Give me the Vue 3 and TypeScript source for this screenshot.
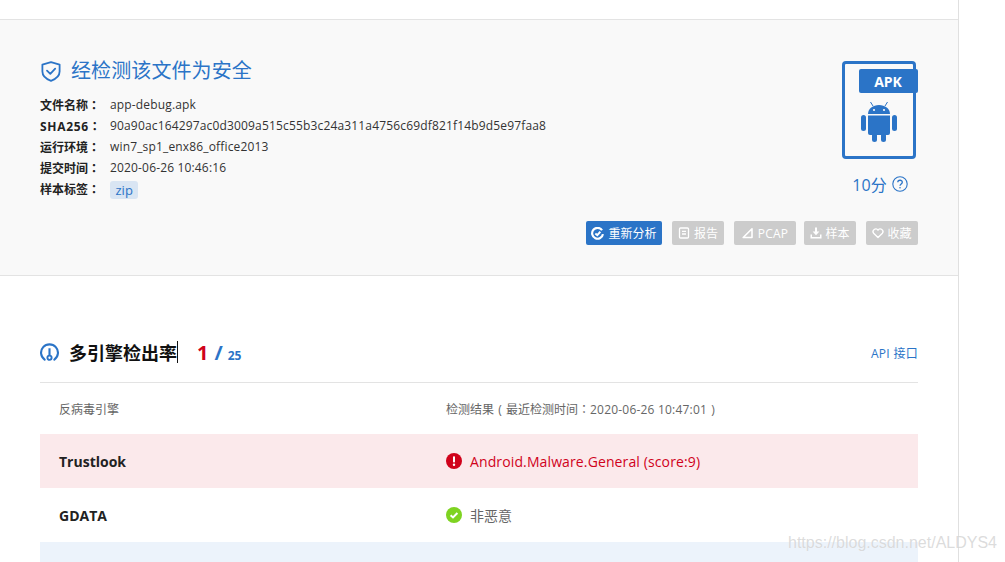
<script setup lang="ts">
const meta = [
  { label: '文件名称', value: 'app-debug.apk' },
  { label: 'SHA256', value: '90a90ac164297ac0d3009a515c55b3c24a311a4756c69df821f14b9d5e97faa8' },
  { label: '运行环境', value: 'win7_sp1_enx86_office2013' },
  { label: '提交时间', value: '2020-06-26 10:46:16' },
]
</script>

<template>
  <div class="viewport">
    <div class="page">
      <section class="summary">
        <div class="info">
          <h1 class="verdict">
            <svg class="shield" viewBox="0 0 20 21" width="20" height="21" fill="none" stroke="#2b74c7" stroke-width="1.8">
              <path d="M10 1.2 L18.6 3.6 V10.5 C18.6 15.2 14.5 18.2 10 19.8 C5.5 18.2 1.4 15.2 1.4 10.5 V3.6 Z" stroke-linejoin="round" />
              <path d="M6 9.6 L9.3 12.8 L14.2 7.6" stroke-linecap="round" stroke-linejoin="round" />
            </svg>
            <span>经检测该文件为安全</span>
          </h1>
          <dl class="meta">
            <div v-for="m in meta" :key="m.label" class="meta-row">
              <dt><span :class="{ sha: m.label === 'SHA256' }">{{ m.label }}</span><span class="punct">：</span></dt>
              <dd>{{ m.value }}</dd>
            </div>
            <div class="meta-row">
              <dt>样本标签<span class="punct">：</span></dt>
              <dd><span class="tag">zip</span></dd>
            </div>
          </dl>
        </div>
        <div class="side">
          <div class="score-box">
            <div class="apk-file">
              <div class="apk-flag">APK</div>
              <svg class="android" viewBox="0 0 36 42" width="36" height="42" fill="#2b74c7">
                <path d="M9.5 2 L12 6 M26.5 2 L24 6" stroke="#2b74c7" stroke-width="1" fill="none" />
                <path d="M7 14 C7 8.5 12 5 18 5 C24 5 29 8.5 29 14 Z" />
                <circle cx="13" cy="10" r="1.1" fill="#f9f9f9" />
                <circle cx="23" cy="10" r="1.1" fill="#f9f9f9" />
                <path d="M7 15.5 H29 V33 a2 2 0 0 1 -2 2 H9 a2 2 0 0 1 -2 -2 Z" />
                <rect x="0" y="15" width="5" height="16" rx="2.5" />
                <rect x="31" y="15" width="5" height="16" rx="2.5" />
                <rect x="11" y="33" width="5" height="9" rx="2.5" />
                <rect x="20" y="33" width="5" height="9" rx="2.5" />
              </svg>
            </div>
            <div class="score">
              <span>10分</span>
              <svg viewBox="0 0 16 16" width="16" height="16" fill="none" stroke="#2b74c7" stroke-width="1.1">
                <circle cx="8" cy="8" r="7.2" />
                <path d="M5.8 6.3 C5.8 3.6 10.3 3.6 10.3 6.2 C10.3 8 8 7.9 8 9.8" stroke-width="1.3" />
                <circle cx="8" cy="11.8" r="0.8" fill="#2b74c7" stroke="none" />
              </svg>
            </div>
          </div>
          <div class="actions">
            <button class="btn primary">
              <svg viewBox="0 0 12 12" width="13" height="13" fill="none" stroke="#fff" stroke-width="2">
                <path d="M10.2 3 A5 5 0 1 0 11 6.5" />
                <path d="M4 6 L5.8 7.6 L8.6 4.4" stroke-width="1.8" />
              </svg>
              重新分析
            </button>
            <button class="btn">
              <svg viewBox="0 0 12 12" width="12" height="12" fill="none" stroke="#fff" stroke-width="1.3">
                <rect x="1.5" y="1" width="9" height="10" rx="1" />
                <path d="M4 4.3 H8 M4 7 H8" />
              </svg>
              <span class="gap">报告</span>
            </button>
            <button class="btn pcap">
              <svg viewBox="0 0 12 12" width="12" height="12" fill="none" stroke="#fff" stroke-width="1.6">
                <path d="M1.2 10.5 H10 V1.8 Z" stroke-linejoin="round" />
              </svg>
              <span class="gap">PCAP</span>
            </button>
            <button class="btn tight">
              <svg viewBox="0 0 12 12" width="12" height="12" fill="#fff">
                <path d="M5 0.5 H7 V4.5 H9.4 L6 8.2 L2.6 4.5 H5 Z" />
                <path d="M0.5 7.5 H2 V10 H10 V7.5 H11.5 V11.5 H0.5 Z" />
              </svg>
              样本
            </button>
            <button class="btn">
              <svg viewBox="0 0 12 12" width="12" height="12" fill="none" stroke="#fff" stroke-width="1.4">
                <path d="M6 10.6 L1.6 6.2 C-0.4 3.4 3.8 0 6 3.2 C8.2 0 12.4 3.4 10.4 6.2 Z" stroke-linejoin="round" />
              </svg>
              收藏
            </button>
          </div>
        </div>
      </section>

      <section class="engines">
        <header class="engines-head">
          <div class="title-wrap">
            <svg viewBox="0 0 18 18" width="19" height="19" fill="none" stroke="#2b74c7" stroke-width="2">
              <path d="M4.4 15.8 A8 8 0 1 1 13.6 15.8" stroke-linecap="round" />
              <path d="M9 5 V11.5" stroke-width="2" />
              <circle cx="9" cy="14" r="2" stroke-width="1.8" />
            </svg>
            <h2 class="title">多引擎检出率<i class="caret"></i></h2>
            <span class="rate"><b class="hit">1</b><b class="slash">/</b><b class="total">25</b></span>
          </div>
          <a class="api">API 接口</a>
        </header>
        <div class="row head-row">
          <div class="col-a">反病毒引擎</div>
          <div class="col-b">检测结果<span class="paren">(</span>最近检测时间<span class="punct">：</span><span class="date">2020-06-26 10:47:01</span><span class="paren">)</span></div>
        </div>
        <div class="row danger">
          <div class="col-a strong">Trustlook</div>
          <div class="col-b result">
            <svg viewBox="0 0 16 16" width="16" height="16">
              <circle cx="8" cy="8" r="8" fill="#d0021b" />
              <rect x="7" y="3.2" width="2" height="6.4" rx="0.8" fill="#fff" />
              <circle cx="8" cy="11.8" r="1.2" fill="#fff" />
            </svg>
            <span class="malware">Android.Malware.General (score:9)</span>
          </div>
        </div>
        <div class="row">
          <div class="col-a strong">GDATA</div>
          <div class="col-b result safe">
            <svg viewBox="0 0 16 16" width="16" height="16">
              <circle cx="8" cy="8" r="8" fill="#7ed321" />
              <path d="M4.6 8.2 L7 10.4 L11.4 6" fill="none" stroke="#fff" stroke-width="2" />
            </svg>
            <span>非恶意</span>
          </div>
        </div>
        <div class="row info-row"></div>
      </section>
    </div>
    <div class="watermark">https://blog.csdn.net/ALDYS4</div>
  </div>
</template>

<style>
html, body { margin: 0; height: 100%; overflow: hidden; background: #fff; }
</style>

<style scoped>
.viewport {
  position: relative;
  width: 1005px;
  height: 562px;
  overflow: hidden;
  font-family: "Open Sans", "Noto Sans CJK SC", sans-serif;
  font-size: 12px;
  color: #333;
}
.punct { font-family: "Noto Sans CJK TC", sans-serif; }
.paren { display: inline-block; width: 12px; text-align: center; }
.page {
  box-sizing: border-box;
  width: 959px;
  height: 562px;
  padding-top: 19px;
  border-right: 1px solid #e0e0e0;
}
.summary {
  box-sizing: border-box;
  height: 257px;
  display: flex;
  justify-content: space-between;
  padding: 0 40px;
  background: #f9f9f9;
  border-top: 1px solid #e3e3e3;
  border-bottom: 1px solid #e3e3e3;
}
.verdict {
  display: flex;
  align-items: center;
  gap: 10px;
  margin: 41px 0 0;
  height: 20px;
  font-size: 20px;
  font-weight: 400;
  color: #2b74c7;
  line-height: 20px;
  letter-spacing: 0.1px;
}
.shield { margin-left: 1px; }
.meta { margin: 13px 0 0; }
.meta-row { display: flex; height: 21px; align-items: center; line-height: 21px; }
.meta dt { width: 70px; font-weight: 700; color: #222; white-space: nowrap; }
.sha { letter-spacing: 0.7px; }
.meta dd { margin: 0; color: #333; letter-spacing: 0.16px; }
.tag {
  display: block;
  height: 18px;
  line-height: 18px;
  margin-top: 3px;
  padding: 0 5.5px;
  border-radius: 3px;
  background: #d9e5f3;
  color: #2b74c7;
  font-size: 13px;
  letter-spacing: 0;
}
.side { display: flex; flex-direction: column; align-items: flex-end; }
.score-box { width: 96px; margin-top: 41px; margin-right: -10px; display: flex; flex-direction: column; align-items: center; }
.apk-file {
  position: relative;
  box-sizing: border-box;
  width: 74px;
  height: 98px;
  margin-left: -3px;
  border: 3px solid #2b74c7;
  border-radius: 4px;
  display: flex;
  justify-content: center;
}
.apk-flag {
  position: absolute;
  top: 5px;
  left: 14px;
  width: 59px;
  height: 24px;
  border-radius: 2px;
  background: #2b74c7;
  color: #fff;
  font-size: 14px;
  font-weight: 700;
  line-height: 26px;
  text-align: center;
}
.android { margin-top: 36px; }
.score {
  display: flex;
  align-items: center;
  gap: 5px;
  margin-top: 16px;
  height: 18px;
  font-size: 16px;
  color: #2b74c7;
}
.actions { display: flex; gap: 10px; margin-top: 28px; }
.btn {
  display: flex;
  align-items: center;
  justify-content: center;
  gap: 3px;
  box-sizing: border-box;
  min-width: 52px;
  height: 24px;
  padding: 0 5px;
  border: 0;
  border-radius: 2px;
  background: #ccc;
  color: #fff;
  font: inherit;
  white-space: nowrap;
}
.btn.primary { background: #2b74c7; width: 76px; gap: 4px; }
.btn.pcap { width: 62px; letter-spacing: 0.2px; }
.btn.tight { margin-left: -2px; }
.gap { margin-left: 1px; }
.engines { padding: 0 40px; }
.engines-head {
  display: flex;
  justify-content: space-between;
  align-items: center;
  box-sizing: border-box;
  height: 107px;
  padding-top: 47px;
  border-bottom: 1px solid #e3e3e3;
}
.title-wrap { display: flex; align-items: center; gap: 10px; }
.title {
  position: relative;
  margin: 0;
  font-size: 18px;
  font-weight: 700;
  color: #111;
  line-height: 24px;
}
.caret {
  position: absolute;
  right: -1px;
  top: 0;
  width: 1px;
  height: 22px;
  background: #111;
}
.rate { display: flex; align-items: baseline; margin-left: 10px; }
.hit { font-size: 20px; color: #d0021b; }
.slash { font-size: 20px; color: #2b74c7; margin-left: 6px; }
.total { font-size: 12px; color: #2b74c7; margin-left: 5px; }
.api { color: #2b74c7; letter-spacing: 0.3px; }
.row { display: flex; align-items: center; height: 54px; }
.head-row { height: 51px; color: #666; padding-top: 1px; box-sizing: border-box; }
.date { letter-spacing: 0.2px; }
.col-a { width: 406px; padding-left: 19px; box-sizing: border-box; }
.col-b { flex: 1; }
.strong { font-size: 14px; font-weight: 700; color: #222; }
.danger { background: #fbe9eb; }
.result { display: flex; align-items: center; gap: 8px; font-size: 14px; color: #d0021b; }
.malware { letter-spacing: 0.12px; }
.result.safe { color: #666; }
.info-row { background: #ecf3fb; }
.watermark {
  position: absolute;
  left: 788px;
  top: 534px;
  font-family: "Liberation Sans", sans-serif;
  font-size: 16px;
  color: rgba(190, 190, 190, 0.55);
  text-shadow: 0 0 1px rgba(255,255,255,.8);
  white-space: nowrap;
}
</style>
